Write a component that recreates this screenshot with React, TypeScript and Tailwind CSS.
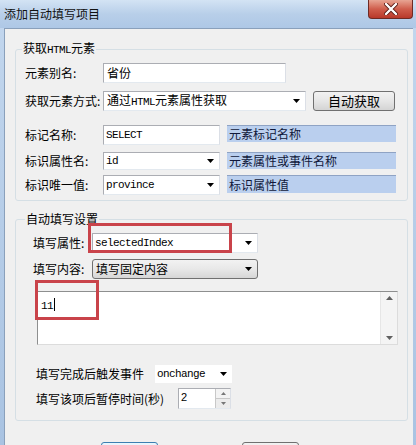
import React from "react";

function Arrow() {
  return (
    <svg width="7" height="4" viewBox="0 0 7 4">
      <path d="M0 0h7L3.5 4z" fill="#000" />
    </svg>
  );
}

const mono = "font-['Liberation_Mono',monospace] text-[11px] tracking-[-0.6px]";

function TextBox({ w, h, text, arrow }: { w: string; h: string; text: string; arrow?: boolean }) {
  return (
    <div className={`${w} ${h} flex items-center border border-[#abadb3] border-b-[#e3e9ef] border-r-[#dbdfe6] bg-white`}>
      <span className={`flex-1 pl-[2px] text-black ${mono}`}>{text}</span>
      {arrow && (
        <div className="flex w-[16px] items-center justify-center pr-[2px]">
          <Arrow />
        </div>
      )}
    </div>
  );
}

function BlueBox({ h, text }: { h: string; text: string }) {
  return (
    <div className={`ml-[7px] w-[169px] ${h} flex items-center border-t border-t-[#8fa3c4] bg-[#bacfee] pl-[2px] text-[12px] leading-none text-[#10183a]`}>
      {text}
    </div>
  );
}

export default function App() {
  return (
    <div className="relative h-[445px] w-[416px] overflow-hidden bg-gradient-to-b from-[#c3d7ee] to-[#a9c3e2] font-['Noto_Sans_CJK_SC',sans-serif] text-[12px] text-black">
      {/* title bar */}
      <div className="relative flex h-[28px] items-center bg-gradient-to-b from-[#d3e3f4] via-[#b8cfe9] to-[#aec8e6] pl-[4px]">
        <span className="text-[12px] leading-none text-[#111]">添加自动填写项目</span>
        <div className="absolute right-[3px] top-0 flex h-[19px] w-[45px] items-center justify-center rounded-b-[4px] border border-t-0 border-[#6e2a24] bg-gradient-to-b from-[#e7a493] via-[#cf5d4c] to-[#b8382a]">
          <svg width="14" height="12" viewBox="0 0 14 12">
            <path d="M2 1 L12 11 M12 1 L2 11" stroke="#5a1a14" strokeWidth="4" strokeLinecap="round" />
            <path d="M2 1 L12 11 M12 1 L2 11" stroke="#ffffff" strokeWidth="2.4" strokeLinecap="round" />
          </svg>
        </div>
      </div>

      {/* body with frame */}
      <div className="ml-[4px] mr-[3px] h-[417px] border-l border-t border-[#8aa0bb] bg-[#f0f0f0]">
        {/* group 1 */}
        <fieldset className="ml-[10px] mt-[11px] w-[393px] rounded-[3px] border border-[#d5dfe5] pb-[5px] pl-[9px]">
          <legend className="-ml-[3px] px-[1px] text-[12px] leading-[16px]">
            获取<span className={mono}>HTML</span>元素
          </legend>
          <div className="mt-[5px] flex h-[20px] items-center">
            <span className="w-[78px]">元素别名:</span>
            <div className="flex h-[20px] w-[183px] items-center border border-[#abadb3] border-b-[#e3e9ef] border-r-[#dbdfe6] bg-white pl-[3px] text-[12px]">
              省份
            </div>
          </div>
          <div className="mt-[8px] flex h-[20px] items-center">
            <span className="w-[78px]">获取元素方式:</span>
            <div className="flex h-[20px] w-[203px] items-center border border-[#abadb3] border-b-[#e3e9ef] border-r-[#dbdfe6] bg-white">
              <span className="flex-1 pl-[3px]">
                通过<span className={mono}>HTML</span>元素属性获取
              </span>
              <div className="flex w-[16px] items-center justify-center pr-[2px]">
                <Arrow />
              </div>
            </div>
            <div className="ml-[7px] flex h-[20px] w-[82px] items-center justify-center rounded-[3px] border border-[#707070] bg-gradient-to-b from-[#f2f2f2] via-[#e6e6e6] to-[#d4d4d4] text-[13px]">
              自动获取
            </div>
          </div>
          <div className="mt-[14px] flex items-start">
            <span className="flex h-[20px] w-[78px] items-center">标记名称:</span>
            <TextBox w="w-[117px]" h="h-[20px]" text="SELECT" />
            <BlueBox h="h-[17px]" text="元素标记名称" />
          </div>
          <div className="mt-[7px] flex items-start">
            <span className="flex h-[18px] w-[78px] items-center">标识属性名:</span>
            <TextBox w="w-[117px]" h="h-[18px]" text="id" arrow />
            <BlueBox h="h-[17px]" text="元素属性或事件名称" />
          </div>
          <div className="mt-[5px] flex items-start">
            <span className="flex h-[20px] w-[78px] items-center">标识唯一值:</span>
            <TextBox w="w-[117px]" h="h-[20px]" text="province" arrow />
            <BlueBox h="h-[18px]" text="标识属性值" />
          </div>
        </fieldset>

        {/* group 2 */}
        <fieldset className="ml-[10px] mt-[10px] w-[393px] rounded-[3px] border border-[#d5dfe5] pb-[11px] pl-[17px]">
          <legend className="-ml-[8px] px-[1px] text-[12px] leading-[16px]">自动填写设置</legend>
          <div className="mt-[6px] flex h-[20px] items-center">
            <span className="w-[59px]">填写属性:</span>
            <TextBox w="w-[166px]" h="h-[20px]" text="selectedIndex" arrow />
          </div>
          <div className="mt-[6px] flex h-[20px] items-center">
            <span className="w-[59px]">填写内容:</span>
            <div className="flex h-[20px] w-[166px] items-center rounded-[3px] border border-[#707070] bg-gradient-to-b from-[#f2f2f2] via-[#e8e8e8] to-[#d6d6d6]">
              <span className="flex-1 pl-[3px]">填写固定内容</span>
              <div className="flex w-[16px] items-center justify-center pr-[2px]">
                <Arrow />
              </div>
            </div>
          </div>
          <div className="ml-[4px] mt-[12px] flex h-[54px] w-[361px] border border-[#8e8f8f] border-b-[#dcdcdc] border-r-[#dcdcdc] bg-white">
            <div className="flex-1 pl-[3px] pt-[3px]">
              <span className={`${mono} leading-[14px]`}>11</span>
              <span className="ml-[1px] inline-block h-[13px] w-[1px] translate-y-[2px] bg-black" />
            </div>
            <div className="flex w-[17px] flex-col items-center justify-between border-l border-[#e6e6e6] bg-[#f4f4f4] py-[4px]">
              <svg width="7" height="4" viewBox="0 0 7 4">
                <path d="M0 4h7L3.5 0z" fill="#606060" />
              </svg>
              <svg width="7" height="4" viewBox="0 0 7 4">
                <path d="M0 0h7L3.5 4z" fill="#606060" />
              </svg>
            </div>
          </div>
          <div className="ml-[3px] mt-[20px] flex h-[18px] items-center">
            <span className="w-[119px]">填写完成后触发事件</span>
            <div className="flex h-[18px] w-[77px] items-center bg-white">
              <span className={`flex-1 pl-[2px] ${mono}`}>onchange</span>
              <div className="flex w-[16px] items-center justify-center pr-[2px]">
                <Arrow />
              </div>
            </div>
          </div>
          <div className="ml-[3px] mt-[5px] flex h-[21px] items-center">
            <span className="w-[142px]">填写该项后暂停时间(秒)</span>
            <div className="flex h-[21px] w-[53px] border border-[#abadb3] border-b-[#e3e9ef] border-r-[#dbdfe6] bg-white">
              <span className="flex-1 pl-[2px] pt-[1px] font-['Liberation_Sans',sans-serif] text-[11px] leading-[14px]">2</span>
              <div className="flex w-[15px] flex-col border-l border-[#c8c8c8]">
                <div className="flex flex-1 items-center justify-center border-b border-[#c8c8c8] bg-[#f3f3f3]">
                  <svg width="5" height="3" viewBox="0 0 5 3">
                    <path d="M0 3h5L2.5 0z" fill="#777" />
                  </svg>
                </div>
                <div className="flex flex-1 items-center justify-center bg-[#ececec]">
                  <svg width="5" height="3" viewBox="0 0 5 3">
                    <path d="M0 0h5L2.5 3z" fill="#777" />
                  </svg>
                </div>
              </div>
            </div>
          </div>
        </fieldset>

        {/* buttons */}
        <div className="mt-[21px] flex">
          <div className="ml-[96px] flex h-[23px] w-[57px] items-center justify-center rounded-[3px] border border-[#3c7fb1] bg-gradient-to-b from-[#eaf6fd] to-[#bee6fd]">
            确定
          </div>
          <div className="ml-[84px] flex h-[23px] w-[57px] items-center justify-center rounded-[3px] border border-[#707070] bg-gradient-to-b from-[#f2f2f2] to-[#d4d4d4]">
            取消
          </div>
        </div>
      </div>

      {/* red highlight boxes */}
      <div className="absolute left-[88px] top-[223px] h-[30px] w-[144px] border-[3px] border-[#c9434a]" />
      <div className="absolute left-[35px] top-[280px] h-[40px] w-[64px] border-[3px] border-[#c9434a]" />
    </div>
  );
}
